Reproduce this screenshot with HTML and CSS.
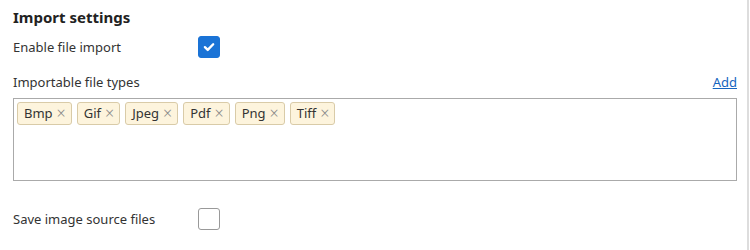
FILE: index.html
```html
<!DOCTYPE html>
<html>
<head>
<meta charset="utf-8">
<link rel="stylesheet" href="styles.css">
</head>
<body>
<div class="page">
  <div class="panel">
    <h2 class="title">Import settings</h2>
    <div class="row">
      <span class="label">Enable file import</span>
      <span class="check on"><svg viewBox="0 0 22 22" width="22" height="22"><path d="M6.5 11.2 L9.6 14.2 L15.6 8" fill="none" stroke="#fff" stroke-width="2.6" stroke-linecap="round" stroke-linejoin="round"/></svg></span>
    </div>
    <div class="types-head">
      <span class="label">Importable file types</span>
      <a class="add" href="#">Add</a>
    </div>
    <div class="box">
      <span class="tag">Bmp<span class="x">×</span></span>
      <span class="tag">Gif<span class="x">×</span></span>
      <span class="tag">Jpeg<span class="x">×</span></span>
      <span class="tag">Pdf<span class="x">×</span></span>
      <span class="tag">Png<span class="x">×</span></span>
      <span class="tag">Tiff<span class="x">×</span></span>
    </div>
    <div class="row save">
      <span class="label">Save image source files</span>
      <span class="check"></span>
    </div>
  </div>
  <div class="rule"></div>
</div>
</body>
</html>
```
FILE: styles.css
```css
html, body { margin: 0; padding: 0; background: #fff; }
body { font-family: "Noto Sans", "Open Sans", sans-serif; color: #333; font-size: 13px; }
.page { display: flex; height: 250px; width: 750px; }
.panel { width: 724px; padding: 4px 0 0 13px; }
.rule { width: 2px; margin-left: 10px; background: #ddd; height: 250px; }
.title { font-size: 15px; font-weight: 700; margin: 0; height: 26px; line-height: 26px; color: #222; }
.row { display: flex; align-items: center; height: 22px; margin-top: 6px; }
.label { display: inline-block; width: 185px; line-height: 18px; }
.check { width: 20px; height: 20px; border: 1px solid #aaa; border-radius: 3px; box-sizing: content-box; display: inline-flex; }
.check.on { background: #1a73d6; border-color: #1a73d6; }
.check svg { width: 20px; height: 20px; }
.types-head { display: flex; justify-content: space-between; align-items: flex-end; margin-top: 11px; height: 22px; }
.add { color: #1565c0; text-decoration: underline; line-height: 18px; }
.box { margin-top: 7px; border: 1px solid #aaa; height: 75px; padding: 3px; display: flex; align-items: flex-start; gap: 5px; }
.tag { display: inline-flex; align-items: center; height: 21px; padding: 0 5px 0 6px; background: #fdf4dd; border: 1px solid #d9cba8; border-radius: 3px; color: #333; line-height: 21px; }
.x { color: #888; margin-left: 4px; font-size: 16px; font-weight: 300; }
.save { margin-top: 27px; }
.save .check { border-color: #999; }
```
